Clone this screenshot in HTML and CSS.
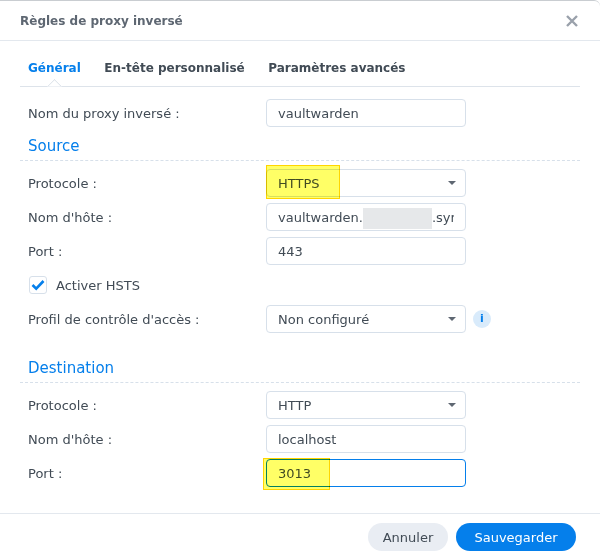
FILE: index.html
```html
<!DOCTYPE html>
<html lang="fr">

    <head>
        <meta charset="UTF-8">
        <title>Règles de proxy inversé</title>
        <link rel="stylesheet" href="styles.css">
    </head>

    <body>
        <div class="dialog">
            <div class="header">
                <h1>Règles de proxy inversé</h1>
                <svg class="close" width="12" height="12" viewBox="0 0 12 12">
                    <path d="M1 1L11 11M11 1L1 11" stroke="#9aa1ab" stroke-width="2.4" fill="none" />
                </svg>
            </div>

            <div class="tabs">
                <span class="tab active">Général</span>
                <span class="tab">En-tête personnalisé</span>
                <span class="tab">Paramètres avancés</span>
            </div>

            <div class="content">
                <div class="row">
                    <label>Nom du proxy inversé :</label>
                    <div class="field">vaultwarden</div>
                </div>

                <h2 class="source-title">Source</h2>
                <div class="row">
                    <label>Protocole :</label>
                    <div class="field select">HTTPS<span class="mark mark-https"></span></div>
                </div>
                <div class="row">
                    <label>Nom d'hôte :</label>
                    <div class="field"><span class="clip">vaultwarden.<span class="blur"></span>.synology.me</span></div>
                </div>
                <div class="row">
                    <label>Port :</label>
                    <div class="field">443</div>
                </div>
                <div class="check-row">
                    <span class="checkbox">
                        <svg width="14" height="12" viewBox="0 0 14 12">
                            <path d="M1.5 6L5.2 9.6L12.5 2" stroke="#057feb" stroke-width="2.6" fill="none" />
                        </svg>
                    </span>
                    <span>Activer HSTS</span>
                </div>
                <div class="row">
                    <label>Profil de contrôle d'accès :</label>
                    <div class="field select">Non configuré</div>
                    <span class="info">i</span>
                </div>

                <h2 class="dest-title">Destination</h2>
                <div class="row">
                    <label>Protocole :</label>
                    <div class="field select">HTTP</div>
                </div>
                <div class="row">
                    <label>Nom d'hôte :</label>
                    <div class="field">localhost</div>
                </div>
                <div class="row">
                    <label>Port :</label>
                    <div class="field focus">3013<span class="mark mark-port"></span></div>
                </div>
            </div>

            <div class="footer">
                <button class="cancel">Annuler</button>
                <button class="save">Sauvegarder</button>
            </div>
        </div>
    </body>

</html>
```

FILE: styles.css
```css
body {
    margin: 0;
    background: white;
    font-family: "DejaVu Sans", Verdana, sans-serif;
    font-size: 13px;
    color: #414b55;
}

.dialog {
    width: 600px;
    height: 560px;
    box-sizing: border-box;
    border-top: 1px solid #c9cdd1;
    border-top-right-radius: 6px;
    display: flex;
    flex-direction: column;
    overflow: hidden;
}

.header {
    height: 39px;
    padding: 0 22px 0 20px;
    border-bottom: 1px solid #e3e8ee;
    display: flex;
    align-items: center;
    justify-content: space-between;
}

.header h1 {
    margin: 0;
    font-size: 12px;
    font-weight: bold;
    color: #5e6772;
}

.tabs {
    margin: 0 20px;
    height: 46px;
    box-sizing: border-box;
    border-bottom: 1px solid #dde3ea;
    padding: 8px 0 0 8px;
    display: flex;
    align-items: center;
    gap: 23.5px;
    position: relative;
}

.tab {
    font-size: 12px;
    font-weight: bold;
    color: #414b55;
}

.tab.active {
    color: #057feb;
}

/* little notch under the active tab */
.tabs::after {
    content: "";
    position: absolute;
    left: 29px;
    bottom: -1px;
    width: 10px;
    height: 10px;
    background: white;
    border-left: 1px solid #dde3ea;
    border-top: 1px solid #dde3ea;
    transform: translateY(5px) rotate(45deg);
    clip-path: polygon(0 0, 100% 0, 0 100%);
}

.content {
    padding: 12px 20px 0;
    flex: 1;
}

.row {
    height: 28px;
    margin-bottom: 6px;
    padding-left: 8px;
    display: flex;
    align-items: center;
}

.row label {
    width: 238px;
}

.field {
    width: 200px;
    height: 28px;
    box-sizing: border-box;
    border: 1px solid #d7e0ea;
    border-radius: 4px;
    padding: 0 11px;
    line-height: 27px;
    position: relative;
}

.field.focus {
    border-color: #057feb;
}

.select::after {
    content: "";
    position: absolute;
    right: 9px;
    top: 11px;
    border-left: 4px solid transparent;
    border-right: 4px solid transparent;
    border-top: 4px solid #5e6772;
}

.clip {
    display: block;
    width: 176px;
    overflow: hidden;
    white-space: nowrap;
}

.blur {
    display: inline-block;
    width: 69px;
    height: 21px;
    background: #e6e8ea;
    vertical-align: middle;
}

h2 {
    margin: 0;
    height: 22px;
    padding-left: 8px;
    border-bottom: 1px dashed #d7e0ea;
    font-size: 15px;
    font-weight: normal;
    line-height: 16px;
    color: #057feb;
}

.source-title {
    margin-top: 11px;
    margin-bottom: 8px;
}

.dest-title {
    margin-top: 27px;
    margin-bottom: 8px;
}

.check-row {
    height: 28px;
    margin-top: 6px;
    margin-bottom: 6px;
    padding-left: 9px;
    display: flex;
    align-items: center;
    gap: 9px;
}

.checkbox {
    width: 16px;
    height: 16px;
    border: 1px solid #d7e0ea;
    border-radius: 3px;
    display: flex;
    align-items: center;
    justify-content: center;
}

.info {
    width: 18px;
    height: 18px;
    margin-left: 7px;
    border-radius: 50%;
    background: #d9ebfb;
    color: #057feb;
    font-size: 11px;
    font-weight: bold;
    line-height: 18px;
    text-align: center;
}

/* yellow marker added on the screenshot */
.mark {
    position: absolute;
    background: #ffff66;
    border: 1px solid #ffd500;
    box-sizing: border-box;
    mix-blend-mode: multiply;
}

.mark-https {
    left: -1px;
    top: -5px;
    width: 74px;
    height: 34px;
}

.mark-port {
    left: -4px;
    top: -2px;
    width: 67px;
    height: 32px;
}

.footer {
    height: 37px;
    border-top: 1px solid #e3e8ee;
    padding: 9px 24px 0 0;
    display: flex;
    justify-content: flex-end;
    gap: 8px;
}

.footer button {
    height: 28px;
    border: none;
    border-radius: 14px;
    font-family: inherit;
    font-size: 13px;
    padding: 0;
}

.cancel {
    width: 80px;
    background: #e9edf3;
    color: #414b55;
}

.save {
    width: 120px;
    background: #057feb;
    color: white;
}
```
